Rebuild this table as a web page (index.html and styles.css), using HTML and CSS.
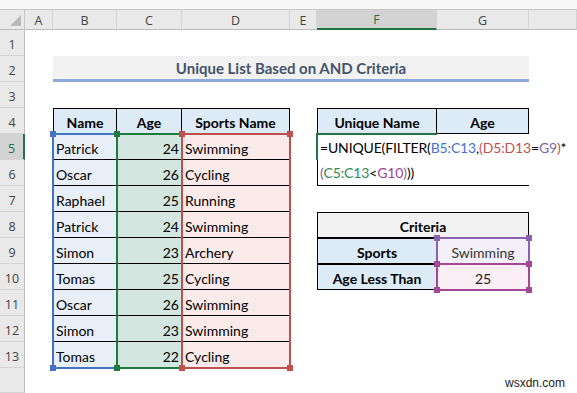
FILE: index.html
```html
<!DOCTYPE html>
<html>
<head>
<meta charset="utf-8">
<link rel="stylesheet" href="styles.css">
</head>
<body>
<div class="topbar"></div>
<div class="sheet">
  <div class="corner r0 hcol"><span class="tri"></span></div>
  <div class="ch r0 cA">A</div>
  <div class="ch r0 cB">B</div>
  <div class="ch r0 cC">C</div>
  <div class="ch r0 cD">D</div>
  <div class="ch r0 cE">E</div>
  <div class="ch r0 cF chsel">F</div>
  <div class="ch r0 cG">G</div>
  <div class="ch r0 cH"></div>

  <div class="rh hcol r1">1</div>
  <div class="rh hcol r2">2</div>
  <div class="rh hcol r3">3</div>
  <div class="rh hcol r4">4</div>
  <div class="rh hcol r5 rhsel">5</div>
  <div class="rh hcol r6">6</div>
  <div class="rh hcol r7">7</div>
  <div class="rh hcol r8">8</div>
  <div class="rh hcol r9">9</div>
  <div class="rh hcol r10">10</div>
  <div class="rh hcol r11">11</div>
  <div class="rh hcol r12">12</div>
  <div class="rh hcol r13">13</div>
  <div class="rh hcol r14"></div>

  <div class="title r2">Unique List Based on AND Criteria</div>

  <div class="cell th r4 cB bl">Name</div>
  <div class="cell th r4 cC">Age</div>
  <div class="cell th r4 cD">Sports Name</div>

  <div class="cell nm r5 cB">Patrick</div><div class="cell ag r5 cC">24</div><div class="cell sp r5 cD">Swimming</div>
  <div class="cell nm r6 cB">Oscar</div><div class="cell ag r6 cC">26</div><div class="cell sp r6 cD">Cycling</div>
  <div class="cell nm r7 cB">Raphael</div><div class="cell ag r7 cC">25</div><div class="cell sp r7 cD">Running</div>
  <div class="cell nm r8 cB">Patrick</div><div class="cell ag r8 cC">24</div><div class="cell sp r8 cD">Swimming</div>
  <div class="cell nm r9 cB">Simon</div><div class="cell ag r9 cC">23</div><div class="cell sp r9 cD">Archery</div>
  <div class="cell nm r10 cB">Tomas</div><div class="cell ag r10 cC">25</div><div class="cell sp r10 cD">Cycling</div>
  <div class="cell nm r11 cB">Oscar</div><div class="cell ag r11 cC">26</div><div class="cell sp r11 cD">Swimming</div>
  <div class="cell nm r12 cB">Simon</div><div class="cell ag r12 cC">23</div><div class="cell sp r12 cD">Swimming</div>
  <div class="cell nm r13 cB last">Tomas</div><div class="cell ag r13 cC last">22</div><div class="cell sp r13 cD last">Cycling</div>

  <div class="sel selB"><i class="h tl"></i><i class="h tr"></i><i class="h bl2"></i><i class="h br"></i></div>
  <div class="sel selC"><i class="h tl"></i><i class="h tr"></i><i class="h bl2"></i><i class="h br"></i></div>
  <div class="sel selD"><i class="h tl"></i><i class="h tr"></i><i class="h bl2"></i><i class="h br"></i></div>

  <div class="cell th r4 cF bl">Unique Name</div>
  <div class="cell th r4 cG">Age</div>

  <div class="formula">
    <div class="fline"><span>=UNIQUE(FILTER(</span><span class="kb">B5:C13</span><span>,</span><span class="kr">(D5:D13</span><span>=</span><span class="kp">G9</span><span class="kr">)</span><span>*</span></div>
    <div class="fline"><span class="kp">(</span><span class="kg">C5:C13</span><span>&lt;</span><span class="km">G10</span><span class="kp">)</span><span>))</span></div>
  </div>
  <div class="active"></div>

  <div class="cell crit r8">Criteria</div>
  <div class="cell th r9 cF bl">Sports</div>
  <div class="cell val1 r9 cG">Swimming</div>
  <div class="cell th r10 cF bl">Age Less Than</div>
  <div class="cell val2 r10 cG">25</div>

  <div class="sel selG9"><i class="h tl"></i><i class="h tr"></i><i class="h bl2"></i><i class="h br"></i></div>
  <div class="sel selG10"><i class="h tl"></i><i class="h tr"></i><i class="h bl2"></i><i class="h br"></i></div>

  <div class="wm">wsxdn.com</div>
</div>
</body>
</html>
```
FILE: styles.css
```css
* { box-sizing: border-box; }
html, body { margin: 0; padding: 0; background: #fff; }
body { width: 577px; height: 393px; overflow: hidden; font-family: "Lato", "Liberation Sans", sans-serif; }

.topbar { height: 10px; background: #f7f7f7; border-bottom: 1px solid #c8c8c8; }

.sheet {
  position: relative;
  display: grid;
  grid-template-columns: 25px 28px 64px 65px 108px 27px 120px 92px 48px;
  grid-template-rows: 20px repeat(13, 26px) 25px;
  background: #fff;
}

.r0 { grid-row: 1; }
.r1 { grid-row: 2; } .r2 { grid-row: 3; } .r3 { grid-row: 4; } .r4 { grid-row: 5; }
.r5 { grid-row: 6; } .r6 { grid-row: 7; } .r7 { grid-row: 8; } .r8 { grid-row: 9; }
.r9 { grid-row: 10; } .r10 { grid-row: 11; } .r11 { grid-row: 12; } .r12 { grid-row: 13; }
.r13 { grid-row: 14; } .r14 { grid-row: 15; }
.hcol { grid-column: 1; }
.cA { grid-column: 2; } .cB { grid-column: 3; } .cC { grid-column: 4; } .cD { grid-column: 5; }
.cE { grid-column: 6; } .cF { grid-column: 7; } .cG { grid-column: 8; } .cH { grid-column: 9; }

.corner { background: #e9e9e9; border-right: 1px solid #c6c6c6; border-bottom: 1px solid #bcbcbc; position: relative; }
.tri { position: absolute; right: 3px; bottom: 3px; width: 0; height: 0; border-left: 11px solid transparent; border-bottom: 11px solid #b9b9b9; }

.ch {
  background: #e9e9e9; border-bottom: 1px solid #bcbcbc; border-right: 1px solid #d4d4d4;
  font-family: "Open Sans", "Noto Sans", sans-serif; font-size: 12.5px; color: #444;
  display: flex; align-items: center; justify-content: center; padding-top: 1px;
}
.chsel { background: #d3d3d3; border-bottom: 2px solid #217346; color: #217346; }

.rh {
  background: #e9e9e9; border-right: 1px solid #bcbcbc; border-bottom: 1px solid #d4d4d4;
  font-family: "Open Sans", "Noto Sans", sans-serif; font-size: 12.5px; color: #444;
  display: flex; align-items: center; justify-content: center; padding-top: 3px;
}
.rhsel { background: #d3d3d3; border-right: 2px solid #217346; color: #217346; }

.title {
  grid-column: 3 / 9; background: #f2f2f2; border-bottom: 3px solid #8ea9db;
  color: #44546a; font-weight: 700; font-size: 15px;
  display: flex; align-items: center; justify-content: center; padding-top: 1px;
}

.cell { display: flex; align-items: center; font-size: 14px; color: #000; padding: 3px 3px 0; white-space: nowrap; }
.th { background: #ddebf7; font-weight: 700; justify-content: center; border-top: 1px solid #000; border-right: 1px solid #000; border-bottom: 1px solid #000; }
.bl { border-left: 1px solid #000; }
.nm { background: #e8eff9; border-bottom: 1px solid #000; }
.ag { background: #d3e6df; border-bottom: 1px solid #000; justify-content: flex-end; }
.sp { background: #fbeaea; border-bottom: 1px solid #000; }
.last { border-bottom: none; }

.sel { position: relative; z-index: 2; margin: -1px; border: 2px solid; }
.sel .h { position: absolute; width: 6px; height: 6px; background: currentColor; z-index: 3; }
.h.tl { top: -4px; left: -4px; }
.h.tr { top: -4px; right: -4px; }
.h.bl2 { bottom: -4px; left: -4px; }
.h.br { bottom: -4px; right: -4px; }
.selB { grid-row: 6 / 15; grid-column: 3; color: #4472c4; border-color: #4472c4; }
.selC { grid-row: 6 / 15; grid-column: 4; color: #1e7b3c; border-color: #1e7b3c; }
.selD { grid-row: 6 / 15; grid-column: 5; color: #c0504d; border-color: #c0504d; }
.selG9 { grid-row: 10; grid-column: 8; color: #8a63b0; border-color: #8a63b0; }
.selG10 { grid-row: 11; grid-column: 8; color: #a34796; border-color: #a34796; }

.formula {
  grid-row: 6 / 8; grid-column: 7 / 9;
  border-left: 1px solid #000; border-bottom: 1px solid #000;
  font-size: 14px; white-space: nowrap; overflow: visible;
  display: flex; flex-direction: column; padding-left: 2px;
}
.fline { height: 26px; display: flex; align-items: center; padding-top: 1px; letter-spacing: -0.15px; }
.kb { color: #4472c4; }
.kr { color: #c0504d; }
.kp { color: #8064a2; }
.kg { color: #2f8a4f; }
.km { color: #a0449b; }
.active { grid-row: 6; grid-column: 7; margin: -1px 0 0 -1px; border-top: 2px solid #217346; border-left: 2px solid #217346; z-index: 2; }

.crit { grid-column: 7 / 9; background: #f2f2f2; font-weight: 700; justify-content: center; border: 1px solid #000; border-top: 1px solid #000; }
.val1 { background: #f4f0f9; justify-content: center; color: #333; }
.val2 { background: #fbeef4; justify-content: center; color: #222; }

.wm { position: absolute; right: 12px; bottom: 3px; font-family: "Liberation Sans", sans-serif; font-size: 12px; color: #222; }
```
